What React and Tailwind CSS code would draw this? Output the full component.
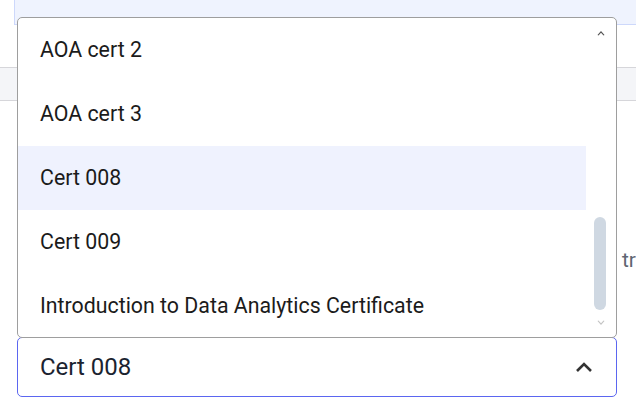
import React from "react";

const options = ["AOA cert 2", "AOA cert 3", "Cert 008", "Cert 009", "Introduction to Data Analytics Certificate"];

export default function App() {
  return (
    <div className="relative w-[636px] h-[420px] overflow-hidden bg-white" style={{ fontFamily: "Roboto, 'Liberation Sans', sans-serif" }}>
      {/* background page */}
      <div className="flex flex-col">
        <div className="ml-[14px] h-[25px] bg-[#eff3fe] border-b border-l border-[#cdd8fb]" />
        <div className="h-[42px]" />
        <div className="h-[34px] bg-[#f4f5f8] border-y border-[#d6d6da]" />
        <div className="h-[146px]" />
        <div className="flex h-[26px] items-center whitespace-nowrap">
          <span className="ml-[622px] text-[21px] leading-none text-[#5f6673]">tr</span>
        </div>
      </div>

      {/* select overlay */}
      <div className="absolute left-[17px] top-[17px] w-[600px] flex flex-col">
        <div className="relative z-10 h-[321px] flex border border-[#9e9e9e] rounded-[5px] bg-white overflow-hidden">
          <div className="flex-1 flex flex-col">
            {options.map((o, i) => (
              <div
                key={o}
                className={`h-[64px] shrink-0 flex items-center pl-[22px] text-[21.33px] text-[#1b1b1b] ${i === 2 ? "bg-[#eff2fe]" : ""}`}
              >
                {o}
              </div>
            ))}
          </div>
          <div className="w-[30px] flex flex-col items-center">
            <svg width="8" height="6" viewBox="0 0 8 6" className="mt-[12px]">
              <path d="M0.5 5 L4 1 L7.5 5 L6.5 5.5 L4 2.7 L1.5 5.5 Z" fill="#505050" />
            </svg>
            <div className="flex-1" />
            <div className="w-[12px] h-[93px] rounded-full bg-[#cfd8e2] mr-[2px]" />
            <svg width="8" height="6" viewBox="0 0 8 6" className="mt-[10px] mb-[11px]">
              <path d="M0.5 1 L4 5 L7.5 1 L6.5 0.5 L4 3.3 L1.5 0.5 Z" fill="#c3c3c3" />
            </svg>
          </div>
        </div>
        <div className="-mt-[1px] h-[60px] flex items-center justify-between border border-[#5b66f0] rounded-[5px] bg-white pl-[22px] pr-[23px]">
          <span className="text-[24px] text-[#1b2330]">Cert 008</span>
          <svg width="18" height="12" viewBox="0 0 18 12">
            <path d="M2 10 L9 3 L16 10" fill="none" stroke="#333" strokeWidth="2.6" />
          </svg>
        </div>
      </div>
    </div>
  );
}
